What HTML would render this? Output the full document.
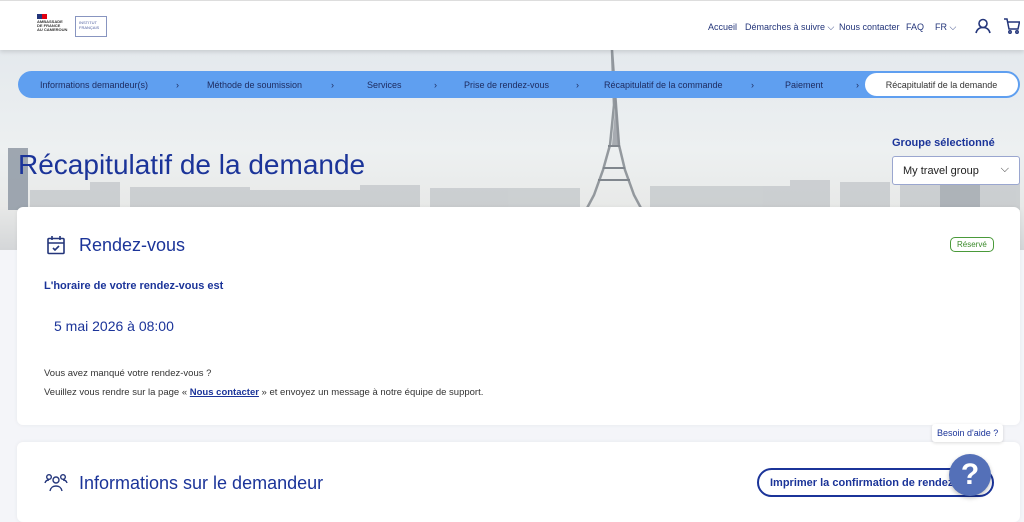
<!DOCTYPE html>
<html><head><meta charset="utf-8"><style>
*{box-sizing:border-box;margin:0;padding:0}
body{width:1024px;height:510px;overflow:hidden;font-family:"Liberation Sans",sans-serif;background:#f4f5f9;position:relative;color:#1d2a6e}
.hdr{position:absolute;left:0;top:0;width:1024px;height:50px;background:#fff;box-shadow:0 2px 4px rgba(0,0,0,.12);z-index:3;border-top:1px solid #ddd}
.nav{position:absolute;top:21px;font-size:9px;color:#23357a}
.hero{position:absolute;left:0;top:50px;width:1024px;height:200px;background:linear-gradient(#e4e9ed,#edf0f1 50%,#e8e9e8 78%,#d4d6d8)}
.steps{position:absolute;left:18px;top:71px;width:1002px;height:27px;border-radius:14px;background:#5f9ff0;z-index:2;font-size:9px;color:#1d2a5e}
.steps span{position:absolute;top:9px}
.cur{position:absolute;right:1px;top:1px;width:155px;height:25px;border-radius:13px;background:#fff;text-align:center;line-height:25px;font-size:9px;color:#333;border:1px solid #5f9ff0}
h1{position:absolute;left:18px;top:149px;font-size:28px;font-weight:normal;color:#1b3499;z-index:2}
.card{position:absolute;left:17px;width:1003px;background:#fff;border-radius:6px;box-shadow:0 0 4px rgba(0,0,0,.06)}
</style></head><body>
<div class="hdr">
 <div style="position:absolute;left:37px;top:13px;width:10px;height:5px;background:linear-gradient(90deg,#23357a 50%,#e1000f 50%)"></div>
 <div style="position:absolute;left:37px;top:19px;font-size:4px;line-height:4px;color:#333;font-weight:bold">AMBASSADE<br>DE FRANCE<br>AU CAMEROUN</div>
 <div style="position:absolute;left:75px;top:15px;width:32px;height:21px;border:1px solid #8895c0;font-size:4px;color:#5060a0;padding:3px">INSTITUT FRANÇAIS</div>
 <span class="nav" style="left:708px">Accueil</span>
 <span class="nav" style="left:745px">Démarches à suivre ⌵</span>
 <span class="nav" style="left:839px">Nous contacter</span>
 <span class="nav" style="left:906px">FAQ</span>
 <span class="nav" style="left:935px">FR ⌵</span>
 <svg style="position:absolute;left:975px;top:17px" width="16" height="16" viewBox="0 0 16 16" fill="none" stroke="#23357a" stroke-width="1.6"><circle cx="8" cy="5.5" r="4"/><path d="M1 15c1-4 4-5.5 7-5.5s6 1.5 7 5.5"/></svg>
 <svg style="position:absolute;left:1004px;top:17px" width="16" height="16" viewBox="0 0 16 16" fill="none" stroke="#23357a" stroke-width="1.5"><path d="M0 1h3l2 10h9l1.5-7H4"/><circle cx="6" cy="14" r="1.2"/><circle cx="13" cy="14" r="1.2"/></svg>
</div>
<div class="hero">
 <svg style="position:absolute;left:0;top:0" width="1024" height="160" viewBox="0 0 1024 160">
  <g fill="#b4b9be" opacity=".55">
   <rect x="30" y="140" width="60" height="20"/><rect x="90" y="132" width="30" height="28"/><rect x="130" y="137" width="120" height="23"/>
   <rect x="250" y="140" width="110" height="20"/><rect x="360" y="135" width="60" height="25"/><rect x="430" y="138" width="150" height="22"/>
   <rect x="650" y="136" width="140" height="24"/><rect x="790" y="130" width="40" height="30"/><rect x="840" y="132" width="50" height="28"/>
   <rect x="900" y="120" width="120" height="40"/>
  </g>
  <rect x="8" y="98" width="20" height="62" fill="#8a93a0" opacity=".8"/>
  <rect x="940" y="112" width="40" height="48" fill="#a0a6ae" opacity=".7"/>
  <path d="M612 0L614 55L610 95L603 120L594 145L586 160H642L634 145L625 120L619 95L616 55Z" fill="none" stroke="#7d838a" stroke-width="2.5" opacity=".8"/>
  <path d="M613 5L615 60L612 95L620 95L617 60Z" fill="#8a8f96" opacity=".7"/>
  <path d="M598 130h32M603 118h22M608 96h12" stroke="#80868d" stroke-width="2"/>
 </svg>
</div>
<div class="steps">
 <span style="left:22px">Informations demandeur(s)</span><span style="left:158px">›</span>
 <span style="left:189px">Méthode de soumission</span><span style="left:313px">›</span>
 <span style="left:349px">Services</span><span style="left:416px">›</span>
 <span style="left:446px">Prise de rendez-vous</span><span style="left:558px">›</span>
 <span style="left:586px">Récapitulatif de la commande</span><span style="left:733px">›</span>
 <span style="left:767px">Paiement</span><span style="left:838px">›</span>
 <div class="cur">Récapitulatif de la demande</div>
</div>
<h1>Récapitulatif de la demande</h1>
<div style="position:absolute;left:892px;top:137px;font-size:11px;font-weight:bold;color:#1b3499;z-index:2">Groupe sélectionné</div>
<div style="position:absolute;left:892px;top:156px;width:128px;height:29px;background:#fff;border:1px solid #9aa6cf;border-radius:3px;font-size:11px;color:#222;padding:8px 10px;z-index:2">My travel group<span style="position:absolute;right:10px;top:6px;color:#333">⌵</span></div>
<div class="card" style="top:207px;height:218px">
 <svg style="position:absolute;left:29px;top:28px" width="20" height="20" viewBox="0 0 20 20" fill="none" stroke="#23357a" stroke-width="1.6"><rect x="2" y="3.5" width="16" height="15" rx="1"/><path d="M2 8h16M6 1v4M14 1v4M7 13l2 2 4-4"/></svg>
 <div style="position:absolute;left:62px;top:28px;font-size:18px;color:#1b3499">Rendez-vous</div>
 <div style="position:absolute;left:933px;top:30px;border:1px solid #4a9a3a;border-radius:5px;font-size:8px;color:#3a8a2a;padding:2px 6px">Réservé</div>
 <div style="position:absolute;left:27px;top:73px;font-size:11px;font-weight:bold;color:#1b3499">L'horaire de votre rendez-vous est</div>
 <div style="position:absolute;left:37px;top:111px;font-size:14px;color:#1b3499">5 mai 2026 à 08:00</div>
 <div style="position:absolute;left:27px;top:161px;font-size:9.5px;color:#333">Vous avez manqué votre rendez-vous ?</div>
 <div style="position:absolute;left:27px;top:180px;font-size:9.5px;color:#333">Veuillez vous rendre sur la page « <b style="color:#1b3499;text-decoration:underline">Nous contacter</b> » et envoyez un message à notre équipe de support.</div>
</div>
<div class="card" style="top:442px;height:80px">
 <svg style="position:absolute;left:27px;top:30px" width="24" height="20" viewBox="0 0 24 20" fill="none" stroke="#23357a" stroke-width="1.4"><circle cx="12" cy="8" r="3"/><path d="M6 19c1-4 3-5 6-5s5 1 6 5"/><circle cx="5" cy="5" r="2.3"/><path d="M1 11c.5-2 2-3 4-3"/><circle cx="19" cy="5" r="2.3"/><path d="M23 11c-.5-2-2-3-4-3"/></svg>
 <div style="position:absolute;left:62px;top:31px;font-size:18px;color:#1b3499">Informations sur le demandeur</div>
 <div style="position:absolute;left:740px;top:26px;width:237px;height:29px;border:2px solid #1b3499;border-radius:15px;font-size:11px;font-weight:bold;color:#1b3499;padding:7px 11px;white-space:nowrap;overflow:hidden">Imprimer la confirmation de rendez-vous</div>
</div>
<div style="position:absolute;left:932px;top:424px;background:#fff;font-size:9px;color:#1b3499;padding:4px 5px;border-radius:3px;box-shadow:0 1px 3px rgba(0,0,0,.15)">Besoin d'aide ?</div>
<div style="position:absolute;left:949px;top:454px;width:42px;height:42px;border-radius:50%;background:#5470b8;color:#fff;font-size:30px;font-weight:bold;text-align:center;line-height:42px;box-shadow:0 2px 4px rgba(0,0,0,.25)">?</div>
</body></html>
